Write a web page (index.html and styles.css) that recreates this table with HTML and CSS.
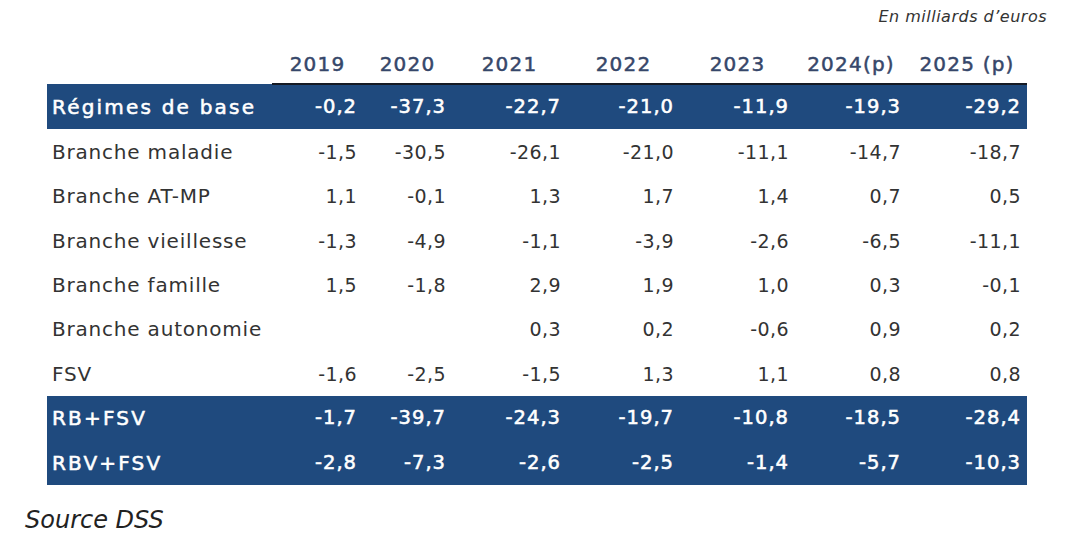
FILE: index.html
```html
<!DOCTYPE html>
<html lang="fr">
<head>
<meta charset="utf-8">
<title>Soldes des régimes</title>
<link rel="stylesheet" href="styles.css">
</head>
<body>
<div class="page">
  <div class="note">En milliards d’euros</div>
  <table class="soldes">
    <colgroup>
      <col class="c-label"><col class="c1"><col class="c2"><col class="c3"><col class="c4"><col class="c5"><col class="c6"><col class="c7">
    </colgroup>
    <thead>
      <tr class="head">
        <th class="blank"></th>
        <th>2019</th><th>2020</th><th>2021</th><th>2022</th><th>2023</th><th>2024(p)</th><th>2025 (p)</th>
      </tr>
    </thead>
    <tbody>
      <tr class="band">
        <td class="label">Régimes de base</td>
        <td>-0,2</td><td>-37,3</td><td>-22,7</td><td>-21,0</td><td>-11,9</td><td>-19,3</td><td>-29,2</td>
      </tr>
      <tr>
        <td class="label">Branche maladie</td>
        <td>-1,5</td><td>-30,5</td><td>-26,1</td><td>-21,0</td><td>-11,1</td><td>-14,7</td><td>-18,7</td>
      </tr>
      <tr>
        <td class="label">Branche AT-MP</td>
        <td>1,1</td><td>-0,1</td><td>1,3</td><td>1,7</td><td>1,4</td><td>0,7</td><td>0,5</td>
      </tr>
      <tr>
        <td class="label">Branche vieillesse</td>
        <td>-1,3</td><td>-4,9</td><td>-1,1</td><td>-3,9</td><td>-2,6</td><td>-6,5</td><td>-11,1</td>
      </tr>
      <tr>
        <td class="label">Branche famille</td>
        <td>1,5</td><td>-1,8</td><td>2,9</td><td>1,9</td><td>1,0</td><td>0,3</td><td>-0,1</td>
      </tr>
      <tr>
        <td class="label">Branche autonomie</td>
        <td></td><td></td><td>0,3</td><td>0,2</td><td>-0,6</td><td>0,9</td><td>0,2</td>
      </tr>
      <tr>
        <td class="label">FSV</td>
        <td>-1,6</td><td>-2,5</td><td>-1,5</td><td>1,3</td><td>1,1</td><td>0,8</td><td>0,8</td>
      </tr>
      <tr class="band">
        <td class="label">RB+FSV</td>
        <td>-1,7</td><td>-39,7</td><td>-24,3</td><td>-19,7</td><td>-10,8</td><td>-18,5</td><td>-28,4</td>
      </tr>
      <tr class="band">
        <td class="label">RBV+FSV</td>
        <td>-2,8</td><td>-7,3</td><td>-2,6</td><td>-2,5</td><td>-1,4</td><td>-5,7</td><td>-10,3</td>
      </tr>
    </tbody>
  </table>
  <p class="source">Source DSS</p>
</div>
</body>
</html>
```

FILE: styles.css
```css
html, body {
  margin: 0;
  padding: 0;
  background: #ffffff;
}

.page {
  width: 1072px;
  height: 549px;
  overflow: hidden;
  font-family: "DejaVu Sans", "Open Sans", sans-serif;
  color: #2b2b2b;
}

.note {
  height: 45px;
  box-sizing: border-box;
  padding: 6px 25px 0 0;
  text-align: right;
  font-style: italic;
  font-size: 16px;
  line-height: 22px;
  letter-spacing: 0.5px;
  color: #333333;
}

.soldes {
  margin-left: 47px;
  width: 980px;
  table-layout: fixed;
  border-collapse: collapse;
  border-spacing: 0;
}

.c-label { width: 225px; }
.c1 { width: 91px; }
.c2 { width: 89px; }
.c3 { width: 115px; }
.c4 { width: 113px; }
.c5 { width: 115px; }
.c6 { width: 112px; }
.c7 { width: 120px; }

.head th {
  height: 38px;
  padding: 0;
  text-align: center;
  vertical-align: middle;
  font-size: 20px;
  font-weight: 400;
  -webkit-text-stroke: 0.5px #36476a;
  color: #36476a;
  letter-spacing: 1.2px;
  border-bottom: 2px solid #151a24;
  white-space: nowrap;
}

.head th.blank {
  border-bottom: 2px solid transparent;
}

.soldes td {
  height: 44.44px;
  padding: 0 6px 0 0;
  text-align: right;
  vertical-align: middle;
  font-size: 19px;
  line-height: 24px;
  color: #333333;
  letter-spacing: 0.4px;
  white-space: nowrap;
}

.soldes td.label {
  text-align: left;
  padding: 0 0 0 5px;
  font-size: 20px;
  letter-spacing: 0.8px;
}

.soldes tr.band td {
  background: #1f4a7e;
  color: #ffffff;
  font-size: 19.5px;
  -webkit-text-stroke: 0.55px #ffffff;
  letter-spacing: 1px;
}

.soldes tr.band td.label {
  font-size: 20px;
  letter-spacing: 2.2px;
}

.source {
  margin: 20px 0 0 25px;
  font-style: italic;
  font-size: 24px;
  line-height: 30px;
  color: #222222;
}
```
